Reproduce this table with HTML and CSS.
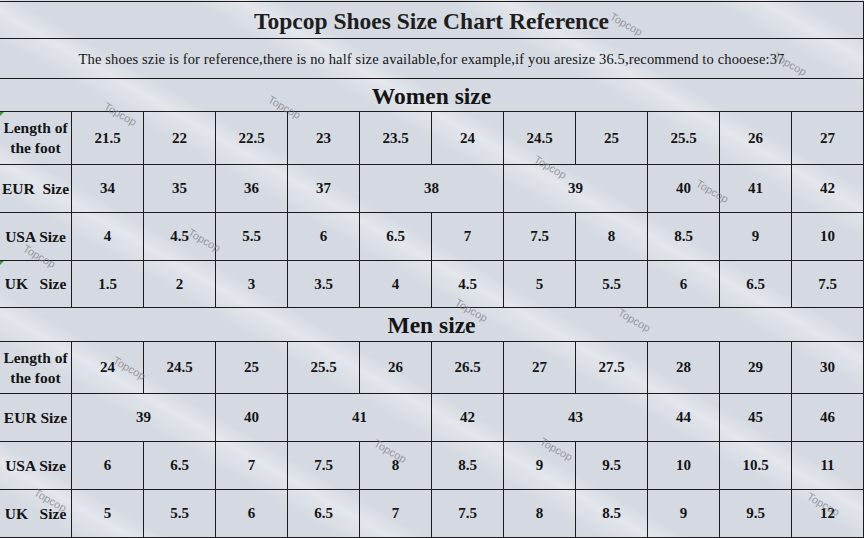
FILE: index.html
```html
<!DOCTYPE html>
<html>
<head>
<meta charset="utf-8">
<title>Topcop Shoes Size Chart Reference</title>
<link rel="stylesheet" href="styles.css">
</head>
<body>
<div class="sheet">
  <div class="chart">
    <div class="cell full title">Topcop Shoes Size Chart Reference</div>
    <div class="cell full note">The shoes szie is for reference,there is no half size available,for example,if you aresize 36.5,recommend to chooese:37</div>
    <div class="cell full section">Women size</div>

    <div class="cell label">Length of<br>the foot</div>
    <div class="cell">21.5</div><div class="cell">22</div><div class="cell">22.5</div><div class="cell">23</div><div class="cell">23.5</div><div class="cell">24</div><div class="cell">24.5</div><div class="cell">25</div><div class="cell">25.5</div><div class="cell">26</div><div class="cell">27</div>

    <div class="cell label">EUR  Size</div>
    <div class="cell">34</div><div class="cell">35</div><div class="cell">36</div><div class="cell">37</div><div class="cell span2">38</div><div class="cell span2">39</div><div class="cell">40</div><div class="cell">41</div><div class="cell">42</div>

    <div class="cell label">USA Size</div>
    <div class="cell">4</div><div class="cell">4.5</div><div class="cell">5.5</div><div class="cell">6</div><div class="cell">6.5</div><div class="cell">7</div><div class="cell">7.5</div><div class="cell">8</div><div class="cell">8.5</div><div class="cell">9</div><div class="cell">10</div>

    <div class="cell label">UK   Size</div>
    <div class="cell">1.5</div><div class="cell">2</div><div class="cell">3</div><div class="cell">3.5</div><div class="cell">4</div><div class="cell">4.5</div><div class="cell">5</div><div class="cell">5.5</div><div class="cell">6</div><div class="cell">6.5</div><div class="cell">7.5</div>

    <div class="cell full section">Men size</div>

    <div class="cell label">Length of<br>the foot</div>
    <div class="cell">24</div><div class="cell">24.5</div><div class="cell">25</div><div class="cell">25.5</div><div class="cell">26</div><div class="cell">26.5</div><div class="cell">27</div><div class="cell">27.5</div><div class="cell">28</div><div class="cell">29</div><div class="cell">30</div>

    <div class="cell label">EUR Size</div>
    <div class="cell span2">39</div><div class="cell">40</div><div class="cell span2">41</div><div class="cell">42</div><div class="cell span2">43</div><div class="cell">44</div><div class="cell">45</div><div class="cell">46</div>

    <div class="cell label">USA Size</div>
    <div class="cell">6</div><div class="cell">6.5</div><div class="cell">7</div><div class="cell">7.5</div><div class="cell">8</div><div class="cell">8.5</div><div class="cell">9</div><div class="cell">9.5</div><div class="cell">10</div><div class="cell">10.5</div><div class="cell">11</div>

    <div class="cell label">UK   Size</div>
    <div class="cell">5</div><div class="cell">5.5</div><div class="cell">6</div><div class="cell">6.5</div><div class="cell">7</div><div class="cell">7.5</div><div class="cell">8</div><div class="cell">8.5</div><div class="cell">9</div><div class="cell">9.5</div><div class="cell">12</div>
  </div>

  <span class="mark m1">Topcop</span>
  <span class="mark m2">Topcop</span>
  <span class="mark m3">Topcop</span>
  <span class="mark m4">Topcop</span>
  <span class="mark m5">Topcop</span>
  <span class="mark m6">Topcop</span>
  <span class="mark m7">Topcop</span>
  <span class="mark m8">Topcop</span>
  <span class="mark m9">Topcop</span>
  <span class="mark m10">Topcop</span>
  <span class="mark m11">Topcop</span>
  <span class="mark m12">Topcop</span>
  <span class="mark m13">Topcop</span>
  <span class="mark m14">Topcop</span>
  <span class="mark m15">Topcop</span>
  <span class="tick t1"></span>
  <span class="tick t2"></span>
</div>
</body>
</html>
```

FILE: styles.css
```css
html, body {
  margin: 0;
  padding: 0;
}

body {
  width: 864px;
  height: 538px;
  overflow: hidden;
  background: #d6dbe3;
}

.sheet {
  position: relative;
  width: 864px;
  height: 538px;
  padding-top: 1px;
  box-sizing: border-box;
  background:
    repeating-linear-gradient(30deg,
      rgba(255,255,255,0) 0px,
      rgba(255,255,255,0) 40px,
      rgba(255,255,255,0.22) 58px,
      rgba(255,255,255,0.34) 66px,
      rgba(255,255,255,0.0) 84px,
      rgba(255,255,255,0) 130px),
    #d5dae2;
  font-family: "Liberation Serif", "Times New Roman", serif;
  color: #141414;
}

.chart {
  display: grid;
  grid-template-columns: repeat(12, 72px);
  grid-template-rows: 37px 40px 33px 53px 48px 48px 47px 34px 52px 48px 48px 48px;
  border-top: 1px solid #1c1c1c;
}

.cell {
  display: flex;
  align-items: center;
  justify-content: center;
  box-sizing: border-box;
  border-right: 1px solid #1c1c1c;
  border-bottom: 1px solid #1c1c1c;
  font-weight: bold;
  font-size: 15px;
  text-align: center;
  white-space: pre;
}

.full {
  grid-column: 1 / -1;
}

.span2 {
  grid-column: span 2;
}

.title {
  font-size: 23.5px;
  color: #1e1e1e;
  padding-top: 2px;
}

.note {
  font-weight: normal;
  font-size: 14.5px;
  letter-spacing: 0.15px;
  padding-top: 1px;
}

.section {
  font-size: 23.5px;
  padding-top: 2px;
}

.label {
  font-size: 15.5px;
  line-height: 20px;
  white-space: pre;
}

.mark {
  position: absolute;
  font-family: "Liberation Sans", Arial, sans-serif;
  font-size: 11px;
  color: rgba(120, 120, 128, 0.7);
  transform: rotate(30deg);
  transform-origin: left top;
  white-space: nowrap;
  pointer-events: none;
}

.m1 { left: 614px; top: 10px; }
.m2 { left: 778px; top: 50px; }
.m3 { left: 108px; top: 100px; }
.m4 { left: 272px; top: 93px; }
.m5 { left: 192px; top: 226px; }
.m6 { left: 27px; top: 242px; }
.m7 { left: 538px; top: 153px; }
.m8 { left: 700px; top: 177px; }
.m9 { left: 459px; top: 296px; }
.m10 { left: 622px; top: 306px; }
.m11 { left: 117px; top: 354px; }
.m12 { left: 378px; top: 437px; }
.m13 { left: 544px; top: 435px; }
.m14 { left: 38px; top: 486px; }
.m15 { left: 811px; top: 490px; }

.tick {
  position: absolute;
  width: 0;
  height: 0;
  border-top: 4px solid #3a9a3a;
  border-right: 4px solid transparent;
}

.t1 { left: 0; top: 112px; }
.t2 { left: 0; top: 261px; }
```
